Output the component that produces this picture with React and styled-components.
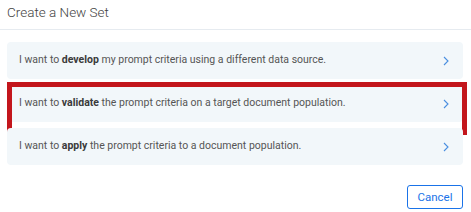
import React from "react";
import styled, { createGlobalStyle } from "styled-components";

const Global = createGlobalStyle`
  html, body { margin: 0; padding: 0; background: #fff; }
  body { font-family: Roboto, "Liberation Sans", Arial, sans-serif; }
`;

const Dialog = styled.div`
  width: 471px;
  height: 212px;
  background: #fff;
  display: flex;
  flex-direction: column;
`;

const Header = styled.div`
  height: 29px;
  border-bottom: 1px solid #e6ebf0;
  padding: 0 7px;
  display: flex;
  align-items: center;
`;

const Title = styled.h2`
  margin: 0;
  font-size: 13.5px;
  font-weight: 300;
  color: #444;
  line-height: 16px;
  margin-top: -5px;
`;

const Body = styled.div`
  padding: 12px 8px 0 7px;
  display: flex;
  flex-direction: column;
  gap: 6px;
`;

const Card = styled.div`
  position: relative;
  height: 37px;
  box-sizing: border-box;
  background: #f2f7fa;
  border-radius: 4px;
  padding: 0 14px 0 12px;
  display: flex;
  align-items: center;
  justify-content: space-between;
  font-size: 10.5px;
  color: #555;
  cursor: pointer;
`;

const Label = styled.span`
  line-height: 14px;
  margin-top: -1px;
  b { font-weight: 700; color: #3a3a3a; }
`;

const Highlight = styled.div`
  position: absolute;
  top: -3px;
  left: 0;
  right: -4px;
  bottom: -13px;
  border: 5px solid #c3161c;
  pointer-events: none;
`;

const Footer = styled.div`
  padding: 20px 8px 0 0;
  display: flex;
  justify-content: flex-end;
`;

const Button = styled.button`
  width: 56px;
  height: 24px;
  box-sizing: border-box;
  border: 1px solid #1a73e8;
  border-radius: 3px;
  background: #fff;
  color: #1a73e8;
  font-family: Roboto, "Liberation Sans", Arial, sans-serif;
  font-size: 11.5px;
  padding: 0;
  cursor: pointer;
`;

const Chevron = () => (
  <svg width="6" height="10" viewBox="0 0 6 10" fill="none">
    <path d="M1 1l4 4-4 4" stroke="#4a8fe0" strokeWidth="1.1" />
  </svg>
);

const options = [
  { pre: "I want to ", bold: "develop", post: " my prompt criteria using a different data source." },
  { pre: "I want to ", bold: "validate", post: " the prompt criteria on a target document population.", highlight: true },
  { pre: "I want to ", bold: "apply", post: " the prompt criteria to a document population." },
];

export default function App() {
  return (
    <>
      <Global />
      <Dialog>
        <Header>
          <Title>Create a New Set</Title>
        </Header>
        <Body>
          {options.map((o) => (
            <Card key={o.bold}>
              <Label>
                {o.pre}
                <b>{o.bold}</b>
                {o.post}
              </Label>
              <Chevron />
              {o.highlight && <Highlight />}
            </Card>
          ))}
        </Body>
        <Footer>
          <Button>Cancel</Button>
        </Footer>
      </Dialog>
    </>
  );
}
